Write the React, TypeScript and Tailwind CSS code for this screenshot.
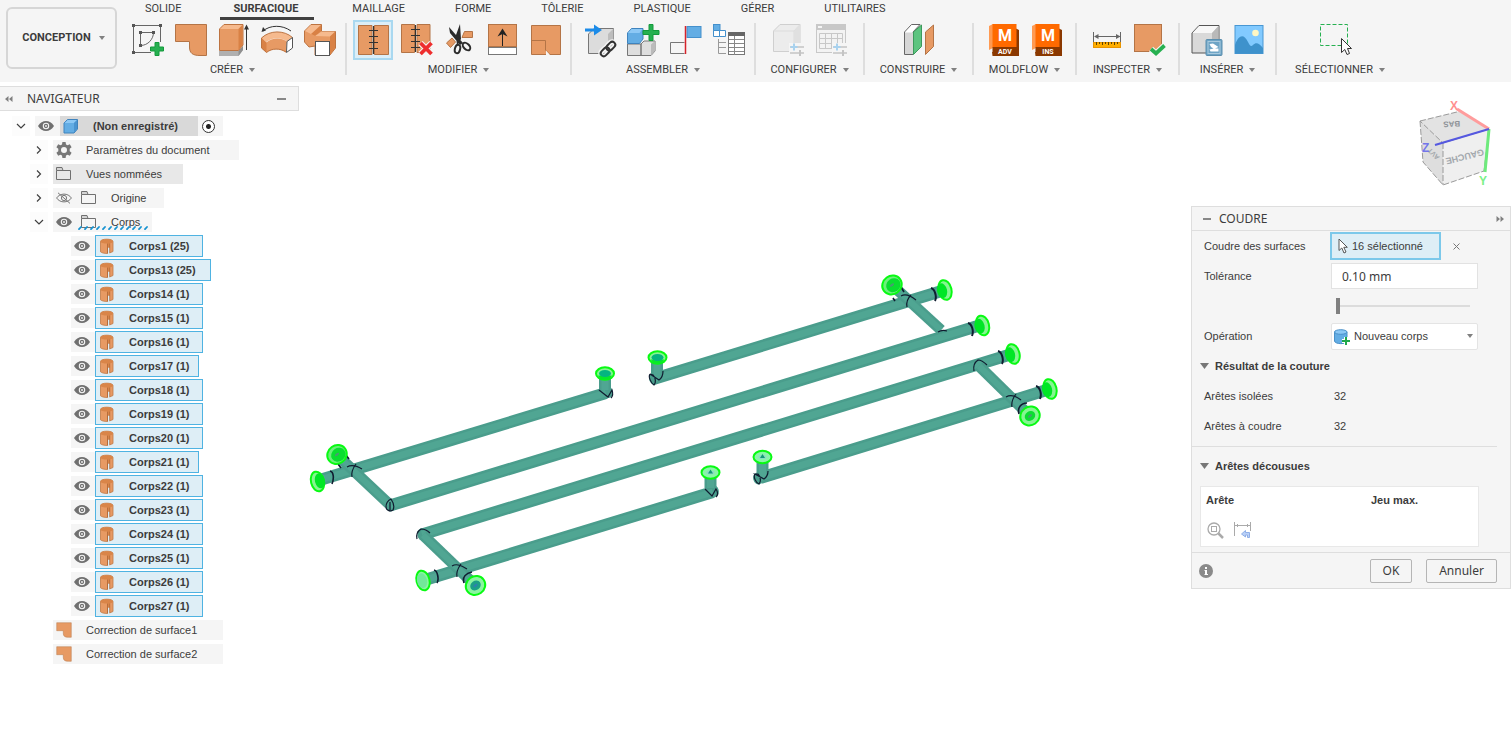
import { useState } from "react";
import type { ReactNode } from "react";
import clsx from "clsx";

const tabs = ["SOLIDE", "SURFACIQUE", "MAILLAGE", "FORME", "TÔLERIE", "PLASTIQUE", "GÉRER", "UTILITAIRES"];

// ---------- small shared glyphs ----------

function Caret({ className }: { className?: string }) {
    return (
        <svg viewBox="0 0 6 4" className={clsx("w-1.5 h-1 shrink-0 fill-[#808080]", className)} aria-hidden="true">
            <path d="M0 0H6L3 4Z" />
        </svg>
    );
}

function DoubleArrow({ flip }: { flip?: boolean }) {
    return (
        <svg viewBox="0 0 8 6" className={clsx("w-2 h-1.5 fill-[#808080]", flip && "rotate-180")} aria-hidden="true">
            <path d="M3.5 0V6L0 3ZM7.5 0V6L4 3Z" />
        </svg>
    );
}

function Chevron({ open }: { open?: boolean }) {
    return (
        <svg viewBox="0 0 10 10" className="w-2.5 h-2.5 fill-none stroke-[#404040]" strokeWidth="1.2" aria-hidden="true">
            <path d={open ? "M1 3L5 7L9 3" : "M3 1.5L6.5 5L3 8.5"} />
        </svg>
    );
}

function Eye({ hidden }: { hidden?: boolean }) {
    if (hidden) {
        return (
            <svg viewBox="0 0 16 12" className="w-4 h-3 fill-none stroke-[#777]" aria-hidden="true">
                <path d="M0.6 6C4 0.8 12 0.8 15.4 6C12 11.2 4 11.2 0.6 6Z" />
                <circle cx="8" cy="6" r="2.6" />
                <path d="M2 0.8L14 11.4" />
            </svg>
        );
    }
    return (
        <svg viewBox="0 0 16 12" className="w-4 h-3" aria-hidden="true">
            <path d="M0 6C4 -0.6 12 -0.6 16 6C12 12.6 4 12.6 0 6Z" fill="#707070" />
            <circle cx="8" cy="6" r="2.7" fill="#707070" stroke="#f5f5f5" strokeWidth="1.1" />
            <circle cx="8" cy="6" r="0.9" fill="#f5f5f5" />
        </svg>
    );
}

function Folder() {
    return (
        <svg viewBox="0 0 16 14" className="w-4 h-3.5 fill-none stroke-[#707070]" aria-hidden="true">
            <path d="M0.5 3.5V12.5H14.5V3.5H7" />
            <path d="M0.5 3.5V0.5H6L7 3.5Z" fill="#d4d4d4" />
        </svg>
    );
}

function Gear() {
    return (
        <svg viewBox="0 0 16 16" className="w-4 h-4 fill-[#777]" aria-hidden="true">
            <path
                fillRule="evenodd"
                d="M6.4 0H9.6L10 2.4L11.6 3.3L13.8 2.3L15.6 5.2L13.7 6.8V9.2L15.6 10.8L13.8 13.7L11.6 12.7L10 13.6L9.6 16H6.4L6 13.6L4.4 12.7L2.2 13.7L0.4 10.8L2.3 9.2V6.8L0.4 5.2L2.2 2.3L4.4 3.3L6 2.4ZM8 5A3 3 0 1 0 8 11A3 3 0 1 0 8 5Z"
            />
        </svg>
    );
}

function BlueCube() {
    return (
        <svg viewBox="0 0 16 16" className="w-4 h-4" aria-hidden="true">
            <path d="M1 5L4.5 1.5H14.5V11L11 15H1Z" fill="#63ade4" stroke="#3f83bd" />
            <path d="M1.5 5L4.7 2H14L11 5Z" fill="#8cc8f5" />
            <path d="M11 5L14 2V11L11 14.5Z" fill="#4a94d0" />
        </svg>
    );
}

function BodyIcon() {
    return (
        <svg viewBox="0 0 16 16" className="w-4 h-4" aria-hidden="true">
            <path d="M1.5 3.5C1.5 0.4 14 0.4 14 3.5V13.5L10.5 15V9.5H8.5V15.5C5 15.5 2.5 14.8 1.5 13.8Z" fill="#e79a64" stroke="#c07a48" strokeWidth="0.8" />
            <path d="M1.5 3.5C1.5 0.4 14 0.4 14 3.5C14 4.6 12 5.2 10.500 5.4V9.5H8.5V5.6C5 5.6 1.500 5 1.5 3.5Z" fill="#d98549" />
            <path d="M8.500 5.600V15.3M10.700 5.5V14.800" stroke="#a8602f" strokeWidth="0.7" />
            <path d="M9 9.800H10.300V15H9Z" fill="#deeef6" />
        </svg>
    );
}

function PatchShape() {
    return <path d="M3.5 2.5H34.5V33.5H28C20.5 33.5 17.5 31 17.5 25V19.5H3.5Z" fill="#e79a64" stroke="#b47446" />;
}

function Cursor({ className }: { className?: string }) {
    return (
        <svg viewBox="0 0 10 16" className={className} aria-hidden="true">
            <path d="M1 1V12.5L3.8 10L6 15L8 14L5.8 9.3H9.3Z" fill="#fff" stroke="#555" />
        </svg>
    );
}

// ---------- ribbon icons, all on a 36px grid ----------

function Ico({ children }: { children: ReactNode }) {
    return (
        <svg viewBox="0 0 36 36" className="relative w-9 h-9 overflow-visible" fill="none" aria-hidden="true">
            {children}
        </svg>
    );
}

function ConfigMark() {
    return (
        <g>
            <path d="M19 21H36V35H19Z" fill="#f5f5f5" />
            <path d="M20 25H34M20 31H34" stroke="#c4c4c4" strokeWidth="1.5" />
            <path d="M24 21.5V28.5M20.5 25H27.5" stroke="#a9d2ee" strokeWidth="2" />
            <path d="M30 28V34" stroke="#c4c4c4" strokeWidth="2" />
        </g>
    );
}

function MoldflowIcon({ label }: { label: string }) {
    return (
        <Ico>
            <path d="M4 4L8 2V26L4 28Z" fill="#ff9a52" />
            <path d="M30 6L34 8V34H8L7 30L30 28Z" fill="#8a3800" />
            <rect x="7.5" y="2" width="24" height="23" fill="#ff6a00" />
            <rect x="7.5" y="25" width="26" height="9" fill="#8a3800" />
            <text x="20" y="19" textAnchor="middle" fontSize="16" className="font-[Roboto] font-bold" fill="#fff">M</text>
            <text x="20" y="32" textAnchor="middle" fontSize="7" className="font-[Roboto] font-bold" fill="#fff">{label}</text>
        </Ico>
    );
}

const sketchIcon = (
    <Ico>
        <path d="M4.5 3.5H31.5V20M4.5 3.5V30.5H22" stroke="#666" />
        <path d="M11.5 23.5V10.5H24.5" stroke="#666" />
        <path d="M24.5 10.5C24.5 17 19 23.5 11.5 23.5" stroke="#666" />
        <path d="M3 2h3v3H3zM30 2h3v3h-3zM3 29h3v3H3zM10 9h3v3h-3zM23 9h3v3h-3zM10 22h3v3h-3z" fill="#555" />
        <path d="M26 20.5H30V25H34.5V29H30V33.5H26V29H21.5V25H26Z" fill="#26b050" stroke="#149a3c" />
    </Ico>
);

const extrudeIcon = (
    <Ico>
        <path d="M4 29H23.5L28 24V28L23.5 34H4Z" fill="#b0b0b0" />
        <path d="M23.5 29L28 24V28L23.5 34Z" fill="#8f8f8f" />
        <path d="M4.5 7L9 2.5H28V23L23.5 28.5H4.5Z" fill="#e79a64" stroke="#bd7340" />
        <path d="M5 7L9.2 3H27.5L23.5 7Z" fill="#f6ba8e" />
        <path d="M23.5 7L27.5 3V23L23.5 28Z" fill="#d98145" />
        <path d="M31.5 5V28" stroke="#333" />
        <path d="M31.5 2.5L34 7.5H29Z" fill="#333" />
    </Ico>
);

const revolveIcon = (
    <Ico>
        <path d="M3 16C12 8 26 8 34.5 15.5L29 19.5C23 15 14 15 8.500 20Z" fill="#f6ba8e" />
        <path d="M3.5 16L8.5 20.5C14 15.5 23 15.5 29 19.5L28 30.5C22 26 14 26 8.5 30.5L3.5 26Z" fill="#e79a64" />
        <path d="M3.5 16L8.5 20.5V30.5L3.5 26Z" fill="#d98145" />
        <path d="M3.5 16C12 8 26 8 34.5 15.5M3.5 16V26L8.5 30.5C14 26 22 26 28 30" stroke="#bd7340" />
        <path d="M29 19.5L34.5 15.5V26L28.5 30.5Z" fill="#fff" stroke="#555" />
        <path d="M5 9C12 3 24 2.5 33 9" stroke="#333" />
        <path d="M3.5 10L5 5L8 8.5Z" fill="#333" />
    </Ico>
);

const loftIcon = (
    <Ico>
        <path d="M3.5 9L10 2.5H20.5V9.5H34.5V26L29 33H14V24L8 25L3.5 20Z" fill="#e79a64" stroke="#bd7340" />
        <path d="M4 9L10 3H20V9.5L14 14Z" fill="#f6ba8e" />
        <path d="M14 14L20.5 9.5H34L29 14.5Z" fill="#f6ba8e" />
        <path d="M29 14.5L34 10V26L29 32.5Z" fill="#d98145" />
        <path d="M10 12L20 3V9.5L14 14Z" fill="#d98145" />
        <rect x="14.5" y="19.5" width="14" height="14" fill="#fff" stroke="#555" />
    </Ico>
);

const stitchIcon = (
    <Ico>
        <path d="M3.5 3.5H17V32.5H3.500ZM19.5 3.5H33.5V32.5H19.5Z" fill="#e79a64" stroke="#b47446" />
        <path d="M18.5 4V32M14 8.500H23M14 14.5H23M14 20.5H23M14 26.5H23" stroke="#333" />
    </Ico>
);

const unstitchIcon = (
    <Ico>
        <path d="M3.5 2.5H16.5V30.5H3.5ZM19 2.5H32V30.5H19Z" fill="#e79a64" stroke="#b47446" />
        <path d="M17.5 3V30M13 7.5H22M13 13.5H22M13 19.5H22M13 25.5H22" stroke="#333" />
        <path d="M22.5 21L33.5 32M33.5 21L22.5 32" stroke="#f5f5f5" strokeWidth="6" />
        <path d="M22.5 21L33.5 32M33.5 21L22.5 32" stroke="#ee2e2e" strokeWidth="3.8" />
    </Ico>
);

const trimIcon = (
    <Ico>
        <path d="M23.5 9.5H31.5V15.5H21Z" fill="#e79a64" stroke="#b47446" />
        <path d="M5.5 21L11 16L14.5 20L9.5 25.5Z" fill="#e79a64" stroke="#b47446" />
        <path d="M8 5L22 21L19 23L9 11ZM19 2L20 17L16 24L15 13Z" fill="#2b2b2b" />
        <ellipse cx="16.5" cy="27" rx="2.6" ry="4.3" stroke="#2b2b2b" strokeWidth="2" transform="rotate(15 16.5 27)" />
        <ellipse cx="25.5" cy="24.5" rx="2.8" ry="4.5" stroke="#2b2b2b" strokeWidth="2" transform="rotate(-45 25.5 24.5)" />
    </Ico>
);

const extendIcon = (
    <Ico>
        <rect x="4.5" y="2.5" width="28" height="22" fill="#e79a64" stroke="#b47446" />
        <rect x="4.5" y="25.5" width="28" height="7" fill="#fff" stroke="#777" />
        <path d="M18.5 10V24" stroke="#222" />
        <path d="M18.5 6.5L23.5 14.5L18.5 12L13.5 14.5Z" fill="#222" />
    </Ico>
);

const filletIcon = (
    <Ico>
        <path d="M4.5 3.5H33.5V32.5H4.5Z" fill="#e79a64" stroke="#b47446" />
        <path d="M4.5 18.5H18.5V28L23 32.5" stroke="#b47446" />
        <path d="M19 28.5L23 33H19Z" fill="#f5f5f5" />
    </Ico>
);

const insertLinkIcon = (
    <Ico>
        <path d="M7.5 12L13 6.5H32.5V26L27 31.5H7.5Z" fill="#dcdcdc" stroke="#777" />
        <path d="M27 12L32.5 6.5V26L27 31.5Z" fill="#bdbdbd" />
        <path d="M4 6.5H13V2.5L21 8L13 13.5V9.5H4Z" fill="#1c8be8" />
        <g transform="rotate(-45 27 27)">
            <rect x="18" y="24" width="10" height="6" rx="3" stroke="#f5f5f5" strokeWidth="5" />
            <rect x="26" y="24" width="10" height="6" rx="3" stroke="#f5f5f5" strokeWidth="5" />
            <rect x="18" y="24" width="10" height="6" rx="3" stroke="#333" strokeWidth="2" />
            <rect x="26" y="24" width="10" height="6" rx="3" stroke="#333" strokeWidth="2" />
        </g>
    </Ico>
);

const newComponentIcon = (
    <Ico>
        <path d="M3.5 22H17V33.5H3.5ZM17 22L20 19H31V29L27 33.5H17Z" fill="#dedede" stroke="#777" />
        <path d="M27 22.5L31 19V29L27 33.5Z" fill="#bbb" />
        <path d="M3.5 11L7.5 6.5H19V17L15.5 21.5H3.5Z" fill="#63ade4" stroke="#3f83bd" />
        <path d="M4 11L7.5 7H18.5L15.5 11Z" fill="#8cc8f5" />
        <path d="M25 2.5H29V8.5H35V12.5H29V18.5H25V12.5H19V8.5H25Z" fill="#26b050" stroke="#149a3c" />
    </Ico>
);

const jointIcon = (
    <Ico>
        <rect x="20" y="4.5" width="14" height="11" fill="#63ade4" stroke="#4490cc" />
        <path d="M17.5 20.5H3.5V31.5H17.5" stroke="#777" />
        <path d="M18.5 4V32" stroke="#d6222a" strokeWidth="1.5" />
    </Ico>
);

const bomIcon = (
    <Ico>
        <rect x="3.5" y="2.5" width="6.500" height="6" fill="#63ade4" stroke="#4490cc" />
        <path d="M3.5 8.5H9.5V14.5H3.5ZM9.5 8.5H15.5V14.5H9.5Z" fill="#fff" stroke="#4490cc" />
        <path d="M8.5 17V31.5M8.5 20.5H16M8.5 25.5H16M8.5 31.500H16" stroke="#999" />
        <rect x="18.5" y="10.5" width="16" height="22" fill="#fff" stroke="#777" />
        <path d="M18 10H35V14H18Z" fill="#666" />
        <path d="M19 17.5H34M19 21.5H34M19 25.5H34M19 29.5H34M24.5 14V33" stroke="#888" />
    </Ico>
);

const configCubeIcon = (
    <Ico>
        <path d="M3.5 9L10 2.5H30V23L24 29.5H3.5Z" fill="#ececec" stroke="#cfcfcf" />
        <path d="M3.5 9H24L30 2.5M24 9V29.5" stroke="#dcdcdc" />
        <path d="M24 9L30 2.5V23L24 29.5Z" fill="#e0e0e0" />
        <ConfigMark />
    </Ico>
);

const configTableIcon = (
    <Ico>
        <rect x="3.5" y="2.5" width="29" height="28" fill="#f3f3f3" stroke="#c8c8c8" />
        <path d="M3 2H33V8H3Z" fill="#c8c8c8" />
        <path d="M5 4h4v2H5z" fill="#f5f5f5" />
        <path d="M6.5 11.5H29.5V26.5H6.5ZM6.5 16.5H29.5M6.5 21.5H29.5M12.5 11.5V26.5M18.5 11.5V26.5M24.5 11.5V26.5" stroke="#c8c8c8" />
        <ConfigMark />
    </Ico>
);

const planeIcon = (
    <Ico>
        <path d="M3.5 10L10.5 2.5H19L12 10V32.5H3.5Z" fill="#fff" stroke="#666" />
        <path d="M4 10.5H12V32H4Z" fill="#d6d6d6" />
        <path d="M12.5 10L20.5 3V24.5L12.5 32.5Z" fill="#5cc47f" stroke="#3d9a5d" />
        <path d="M24.5 10L32.5 3V24.5L24.5 32.5Z" fill="#e79a64" stroke="#b47446" />
    </Ico>
);

const measureIcon = (
    <Ico>
        <path d="M5.5 10V20M32.5 10V20M7 14.5H32" stroke="#666" />
        <path d="M6 14.5L10.5 12V17ZM32.5 14.5L28 12V17Z" fill="#666" />
        <rect x="5.500" y="20.5" width="27" height="5" fill="#ffae00" stroke="#e89400" />
        <path d="M8.5 20V23M11.5 20V22M14.5 20V23M17.5 20V22M20.5 20V23M23.5 20V22M26.5 20V23M29.5 20V22" stroke="#5d4300" />
    </Ico>
);

const validateIcon = (
    <Ico>
        <rect x="3.5" y="2.5" width="27" height="27" fill="#e79a64" stroke="#b47446" />
        <path d="M20 27L25 31.5L33.5 23.5" stroke="#f5f5f5" strokeWidth="6" />
        <path d="M20 27L25 31.5L33.500 23.5" stroke="#26b050" strokeWidth="3.8" />
    </Ico>
);

const insertPartIcon = (
    <Ico>
        <path d="M4 11L11 3.5H31V24L24 31H4Z" fill="#d9d9d9" stroke="#555" />
        <path d="M4.5 11L11.3 4H30.5L24 11Z" fill="#f7f7f7" />
        <path d="M24 11L30.500 4V24H24Z" fill="#b9b9b9" />
        <rect x="18" y="17.5" width="16" height="16" rx="1" fill="#6ea4c5" stroke="#5b8eae" />
        <rect x="20" y="19.5" width="12" height="12" stroke="#a9cade" />
        <path d="M21.5 22L25 21.500L30.500 25L27 26.5H30.5V29.500H22.500L21.500 27.500L25.5 26.500L23 25Z" fill="#fff" />
    </Ico>
);

const insertImageIcon = (
    <Ico>
        <rect x="4" y="3.5" width="28" height="28" fill="#82caff" stroke="#4897d3" />
        <path d="M4 23C8 12 13 12 17 20C19 24 20 25 22 23C25 20 28 21 32 26V31.5H4Z" fill="#3e92cc" />
        <circle cx="24.5" cy="11" r="3.3" fill="#fff7c4" />
    </Ico>
);

const selectIcon = (
    <Ico>
        <rect x="-1.5" y="2.5" width="27" height="21" stroke="#26b050" strokeDasharray="4 2" />
        <path d="M19.5 16.5V30.5L22.8 27.5L25 32.5L27.5 31.5L25.5 26.5H29.5Z" fill="#fff" stroke="#333" />
    </Ico>
);

interface RibbonGroupData {
    label: string;
    width: string;
    icons: ReactNode[];
    active?: number;
}

const groups: RibbonGroupData[] = [
    { label: "CRÉER", width: "w-[227px]", icons: [sketchIcon, <Ico><PatchShape /></Ico>, extrudeIcon, revolveIcon, loftIcon] },
    { label: "MODIFIER", width: "w-[225px]", icons: [stitchIcon, unstitchIcon, trimIcon, extendIcon, filletIcon], active: 0 },
    { label: "ASSEMBLER", width: "w-[184px]", icons: [insertLinkIcon, newComponentIcon, jointIcon, bomIcon] },
    { label: "CONFIGURER", width: "w-[109px]", icons: [configCubeIcon, configTableIcon] },
    { label: "CONSTRUIRE", width: "w-[109px]", icons: [planeIcon] },
    { label: "MOLDFLOW", width: "w-[103px]", icons: [<MoldflowIcon label="ADV" />, <MoldflowIcon label="INS" />] },
    { label: "INSPECTER", width: "w-[103px]", icons: [measureIcon, validateIcon] },
    { label: "INSÉRER", width: "w-[97px]", icons: [insertPartIcon, insertImageIcon] },
    { label: "SÉLECTIONNER", width: "w-[128px]", icons: [selectIcon] },
];

function Ribbon() {
    const [tab, setTab] = useState("SURFACIQUE");

    return (
        <header className="flex h-[82px] shrink-0 bg-[#f5f5f5] font-[Roboto,sans-serif] text-[11px] text-[#3c3c3c]">
            <button className="mt-[7px] ml-1.5 flex h-[62px] w-[111px] shrink-0 items-center justify-center gap-2 rounded-md border-2 border-[#d6d6d6] pl-1 font-bold">
                CONCEPTION
                <Caret />
            </button>
            <div className="ml-[3px]">
                <nav className="ml-[13px] flex gap-[26px]">
                    {tabs.map((t) => (
                        <button
                            key={t}
                            onClick={() => setTab(t)}
                            className={clsx("h-5 border-b-3 leading-4", t === tab ? "border-[#404040] pr-4 pl-3.5 font-bold" : "border-transparent px-3")}
                        >
                            {t}
                        </button>
                    ))}
                </nav>
                <div className="mt-[3px] flex">
                    {groups.map((g) => (
                        <section key={g.label} className={clsx("flex h-[52px] shrink-0 flex-col items-center border-r-2 border-[#dedede] last:border-transparent", g.width)}>
                            <div className="-mt-px flex gap-[7px]">
                                {g.icons.map((icon, i) => (
                                    <button key={i} className="relative h-9 w-9" aria-label={g.label}>
                                        {g.active === i && <span className="absolute -inset-0.5 border-2 border-[#a9d8f0] bg-[#dceef7]" />}
                                        {icon}
                                    </button>
                                ))}
                            </div>
                            <button className="mt-1 flex items-center gap-1.5 leading-4">
                                {g.label}
                                <Caret />
                            </button>
                        </section>
                    ))}
                </div>
            </div>
        </header>
    );
}

// ---------- browser tree ----------

const bodies = [
    { name: "Corps1 (25)", width: "w-[108px]" },
    { name: "Corps13 (25)", width: "w-[116px]" },
    { name: "Corps14 (1)", width: "w-[108px]" },
    { name: "Corps15 (1)", width: "w-[108px]" },
    { name: "Corps16 (1)", width: "w-[108px]" },
    { name: "Corps17 (1)", width: "w-[104px]" },
    { name: "Corps18 (1)", width: "w-[108px]" },
    { name: "Corps19 (1)", width: "w-[108px]" },
    { name: "Corps20 (1)", width: "w-[108px]" },
    { name: "Corps21 (1)", width: "w-[104px]" },
    { name: "Corps22 (1)", width: "w-[108px]" },
    { name: "Corps23 (1)", width: "w-[108px]" },
    { name: "Corps24 (1)", width: "w-[108px]" },
    { name: "Corps25 (1)", width: "w-[108px]" },
    { name: "Corps26 (1)", width: "w-[108px]" },
    { name: "Corps27 (1)", width: "w-[108px]" },
];

function Expander({ open }: { open?: boolean }) {
    return (
        <button className="mr-[5px] flex h-5 w-[18px] items-center justify-center bg-[#fcfcfc]" aria-label="Développer">
            <Chevron open={open} />
        </button>
    );
}

function Navigator() {
    return (
        <aside className="w-[300px] shrink-0 pt-1 font-['Liberation_Sans',Arial,sans-serif] text-[11px] text-[#3c3c3c]">
            <div className="mr-px flex h-[25px] items-center border border-l-0 border-[#dedede] bg-[#f5f5f5] pl-[5px]">
                <DoubleArrow />
                <h2 className="ml-3.5 flex-1 font-['Noto_Sans',sans-serif] text-xs">NAVIGATEUR</h2>
                <button className="mr-3 h-0.5 w-[9px] bg-[#888]" aria-label="Réduire" />
            </div>
            <ul className="mt-[5px] flex flex-col gap-1">
                <li className="flex pl-3">
                    <Expander open />
                    <span className="flex h-5 w-[25px] items-center bg-[#f5f5f5] pl-[3px]"><Eye /></span>
                    <span className="flex h-5 w-[138px] items-center bg-[#d9d9d9] pl-[3px] font-bold">
                        <BlueCube />
                        <span className="ml-3.5">(Non enregistré)</span>
                    </span>
                    <label className="flex h-5 w-[25px] items-center bg-[#f5f5f5] pl-1">
                        <input
                            type="radio"
                            defaultChecked
                            aria-label="Activer"
                            className="h-[13px] w-[13px] appearance-none rounded-full border border-[#333] bg-[radial-gradient(circle,#222_2px,#fff_3px)]"
                        />
                    </label>
                </li>
                <li className="flex pl-[30px]">
                    <Expander />
                    <span className="flex h-5 w-[186px] items-center gap-[14px] bg-[#f5f5f5] pl-[3px]"><Gear />Paramètres du document</span>
                </li>
                <li className="flex pl-[30px]">
                    <Expander />
                    <span className="flex h-5 w-[130px] items-center gap-[14px] bg-[#e8e8e8] pl-[3px]"><Folder />Vues nommées</span>
                </li>
                <li className="flex pl-[30px]">
                    <Expander />
                    <span className="flex h-5 w-[111px] items-center bg-[#f5f5f5] pl-[3px]">
                        <Eye hidden />
                        <span className="ml-[9px] flex items-center gap-[14px]"><Folder />Origine</span>
                    </span>
                </li>
                <li className="flex pl-[30px]">
                    <Expander open />
                    <span className="relative flex h-5 w-[99px] items-center bg-[#f5f5f5] pl-[3px]">
                        <Eye />
                        <span className="ml-[9px] flex items-center gap-[14px]"><Folder />Corps</span>
                        <svg viewBox="0 0 72 4" className="absolute bottom-0.5 left-6 h-1 w-[72px]" aria-hidden="true">
                            {Array.from({ length: 12 }, (_, i) => (
                                <path key={i} d={`M${i * 6 + 2} 3.2L${i * 6 + 4} 1`} stroke="#1793d1" strokeWidth="1.8" strokeLinecap="round" />
                            ))}
                        </svg>
                    </span>
                </li>
                {bodies.map((b) => (
                    <li key={b.name} className="flex h-5 items-center pl-[71px]">
                        <span className="flex h-5 w-6 shrink-0 items-center bg-[#f5f5f5] pl-[3px]"><Eye /></span>
                        <span className={clsx("flex h-[22px] shrink-0 items-center border border-[#4fb3e2] bg-[#deeef6] pr-2 pl-[3px] font-bold", b.width)}>
                            <BodyIcon />
                            <span className="ml-3.5 overflow-hidden whitespace-nowrap">{b.name}</span>
                        </span>
                    </li>
                ))}
                {["Correction de surface1", "Correction de surface2"].map((name) => (
                    <li key={name} className="flex pl-[53px]">
                        <span className="flex h-5 w-[170px] items-center gap-[14px] bg-[#f5f5f5] pl-[3px]">
                            <svg viewBox="2 1 34 34" className="h-4 w-4" aria-hidden="true"><PatchShape /></svg>
                            {name}
                        </span>
                    </li>
                ))}
            </ul>
        </aside>
    );
}

// ---------- 3D model ----------

// long tubes, then the short cross tubes and risers
const longTubes = [
    [318, 480.5, 606, 393],
    [390, 505.5, 981, 325],
    [422, 534.5, 1012, 354],
    [423, 580.5, 713, 492],
    [655, 378.5, 945, 290],
    [760, 478, 1050, 389],
];
const crossTubes = [
    [338, 456, 389, 504],
    [423, 535, 475, 585],
    [892, 285, 941, 330],
    [979, 366, 1030, 416],
];
const risers = [
    [605, 374, 605, 390],
    [657, 357, 657, 376],
    [710.5, 472, 710.5, 488],
    [762.5, 457, 762.5, 475],
];
// closed tube ends and mitres
const elbows = [
    [608, 392], [714, 491], [654, 379], [758, 478.5], [390, 505.5], [422, 534.5], [979, 366],
];

// open ends: centre, radii, tilt, disc fill, core shift and core colour
const caps = [
    { x: 317.5, y: 481.5, rx: 6.5, ry: 10, a: -14, fill: "#86f592", dx: 2.5, core: "#00e626" },
    { x: 423, y: 580.5, rx: 6.5, ry: 10, a: -14, fill: "#8af5a0", dx: -1, core: "#72e89a" },
    { x: 945, y: 290, rx: 6.5, ry: 10, a: -14, fill: "#86f592", dx: -3, core: "#00e626" },
    { x: 982.5, y: 325.5, rx: 6.5, ry: 10, a: -14, fill: "#86f592", dx: -3, core: "#00e626" },
    { x: 1013, y: 354, rx: 6.5, ry: 10, a: -14, fill: "#86f592", dx: -3, core: "#00e626" },
    { x: 1050, y: 389, rx: 6.5, ry: 10, a: -14, fill: "#86f592", dx: -3, core: "#00e626" },
];
const discs = [
    { x: 337, y: 454.5, r: 7.5, ring: "#6cf07a", core: "#0ade30", dot: "#4a9a72", shift: 1 },
    { x: 892, y: 285, r: 7.5, ring: "#6cf07a", core: "#0ade30", dot: "#4a9a72", shift: 1 },
    { x: 475.5, y: 585.5, r: 5.5, ring: "#8af5a0", core: "#1c9f86", dot: "#2f7fb0", shift: 0 },
    { x: 1030, y: 416, r: 5.5, ring: "#86f592", core: "#0ade30", dot: "#4a9a72", shift: 0 },
];
const riserCaps = [
    { x: 605, y: 373.5, open: false },
    { x: 657.5, y: 357.5, open: false },
    { x: 710.5, y: 472.5, open: true },
    { x: 762.5, y: 457, open: true },
];

function Tube({ p, w }: { p: number[]; w: number }) {
    const d = `M${p[0]} ${p[1]}L${p[2]} ${p[3]}`;
    return (
        <>
            <path d={d} stroke="#4a9d8c" strokeWidth={w} />
            <path d={d} stroke="#50a693" strokeWidth={w - 5} />
        </>
    );
}

function Model() {
    return (
        <svg viewBox="300 82 891 649" className="min-w-0 flex-1 self-start" fill="none" role="img" aria-label="Modèle">
            {elbows.map(([x, y]) => <ellipse key={x} cx={x} cy={y} rx="4.8" ry="6" fill="#4a9d8c" transform={`rotate(-15 ${x} ${y})`} />)}
            {longTubes.map((p, i) => <Tube key={i} p={p} w={12} />)}
            {crossTubes.map((p, i) => <Tube key={i} p={p} w={11} />)}
            {risers.map((p, i) => <Tube key={i} p={p} w={12} />)}

            {/* seams */}
            <g stroke="#101c30" strokeWidth="1.2">
                <path d="M347 467C352 464 357 466 362 469M352 477C351 472 353 468 356 464" />
                <path d="M901 296C906 293 911 296 916 300M907 307C906 302 908 298 911 295" />
                <path d="M452 566C457 563 462 566 467 569M457 577C456 572 458 568 461 564" />
                <path d="M1006 397C1011 394 1016 396 1021 400M1012 407C1011 402 1013 398 1016 394" />
                <path d="M417 539C416 535 418 531 421 529C425 529 428 531 430 533" />
                <path d="M974 371C973 366 975 362 978 360C982 360 985 363 987 365" />
                <path d="M386 507C386 503 389 500 391 499C393 502 395 506 393 510C390 512 386 510 386 507ZM390 510V502" />
                <path d="M938 332C941 330 944 330 947 331" />
                <path d="M599 390L608 397L612 390C613 393 613 396 611 398" />
                <path d="M705 489L712 496L716 489C718 492 718 495 716 497" />
                <path d="M650 374C648 377 651 383 654 385C656 383 656 378 653 375L650 374L659 380C662 378 663 375 663 371" />
                <path d="M755 474C753 477 756 483 759 484C761 482 761 477 758 474L755 474L764 479C767 477 768 475 768 471" />
                <path d="M330 471C334 472 334 479 332 484M434 570C438 571 439 580 437 583" strokeWidth="1.6" />
                <path d="M341 468L338 464M349 459L346 455M895 301L893 298M904 292L901 287" strokeWidth="1.6" />
                <path d="M472 572C466 573 462 577 464 583M1027 403C1021 403 1017 408 1019 414" strokeWidth="1.6" />
                <path d="M931 288C935 289 937 297 935 301M968 323C972 324 974 331 972 336M998 351C1002 352 1004 360 1002 364M1036 386C1040 387 1042 394 1040 399" strokeWidth="2" />
            </g>

            {caps.map((c, i) => (
                <g key={i} transform={`rotate(${c.a} ${c.x} ${c.y})`}>
                    <ellipse cx={c.x} cy={c.y} rx={c.rx} ry={c.ry} fill={c.fill} stroke="#08fa12" strokeWidth="2" />
                    <ellipse cx={c.x + c.dx} cy={c.y} rx="5" ry="7.5" fill={c.core} />
                </g>
            ))}
            {discs.map((c, i) => (
                <g key={i} transform={`rotate(-35 ${c.x} ${c.y})`}>
                    <ellipse cx={c.x} cy={c.y} rx="10" ry="9.2" fill={c.ring} stroke="#08fa12" strokeWidth="2" />
                    <ellipse cx={c.x + c.shift} cy={c.y + c.shift} rx={c.r} ry={c.r - 0.8} fill={c.core} />
                    <ellipse cx={c.x} cy={c.y} rx="2.4" ry="1.2" fill={c.dot} />
                </g>
            ))}
            {riserCaps.map((c, i) => (
                <g key={i}>
                    <ellipse cx={c.x} cy={c.y} rx="9" ry="6.2" fill={c.open ? "#8af5a8" : "#86f592"} stroke="#08fa12" strokeWidth="2" />
                    {!c.open && <path d={`M${c.x - 7} ${c.y + 2}H${c.x + 7}L${c.x + 4} ${c.y + 6}H${c.x - 4}Z`} fill="#08e82a" />}
                    <ellipse cx={c.x} cy={c.y} rx={c.open ? 4 : 6} ry={c.open ? 2 : 3.5} fill={c.open ? "#8adcc4" : "#04b580"} />
                    {c.open && <path d={`M${c.x} ${c.y - 3}L${c.x + 2.5} ${c.y + 1}H${c.x - 2.5}Z`} fill="#119a74" />}
                </g>
            ))}
        </svg>
    );
}

function ViewCube() {
    return (
        <svg viewBox="1410 95 90 95" className="mr-2.5 h-[95px] w-[90px]" aria-label="ViewCube" role="img">
            <path d="M1419 121L1460 111L1488 129L1442 143Z" fill="#e3e3e3" />
            <path d="M1419 121L1442 143V185L1422 162Z" fill="#dedede" />
            <path d="M1442 143L1488 129L1483 171L1442 185Z" fill="#efefef" />
            <path d="M1419 121L1460 111L1488 129L1442 143ZM1419 121L1422 162L1442 185L1483 171L1488 129M1442 143V185" fill="none" stroke="#9a9a9a" strokeDasharray="6 2" />
            <g className="font-['Liberation_Sans'] font-bold" fill="#a3a8ad">
                <text transform="translate(1482 149) rotate(166)" fontSize="9">GAUCHE</text>
                <text transform="translate(1459 121) rotate(178)" fontSize="8" fill="#8d9297">BAS</text>
                <text transform="translate(1439 157) rotate(225)" fontSize="7">AVT</text>
            </g>
            <path d="M1456 109L1488 129" stroke="#ff9c9c" strokeWidth="3" />
            <path d="M1488 129L1484 172" stroke="#6eea7c" strokeWidth="3" />
            <path d="M1434 145L1488 129" stroke="#5558e0" strokeWidth="2" />
            <g className="font-['Liberation_Sans'] font-bold" fontSize="12">
                <text x="1449" y="110" fill="#ff8f8f">X</text>
                <text x="1421" y="152" fill="#7376ea">Z</text>
                <text x="1478" y="185" fill="#7cf089">Y</text>
            </g>
        </svg>
    );
}

// ---------- stitch dialog ----------

function SectionTitle({ children }: { children: ReactNode }) {
    return (
        <h3 className="flex h-[30px] items-center gap-1.5 pl-2 font-bold">
            <svg viewBox="0 0 9 6" className="h-1.5 w-[9px] fill-[#777]" aria-hidden="true"><path d="M0 0H9L4.5 6Z" /></svg>
            {children}
        </h3>
    );
}

function StitchPanel() {
    const [tolerance, setTolerance] = useState("0.10 mm");

    return (
        <section className="mt-4 w-80 border border-[#dedede] bg-[#f5f5f5] font-['Liberation_Sans',Arial,sans-serif] text-[11px] text-[#3c3c3c]">
            <header className="flex h-6 items-center border-b border-[#dedede] pr-1.5 pl-[11px]">
                <button className="h-0.5 w-2 bg-[#888]" aria-label="Réduire" />
                <h2 className="ml-2 flex-1 font-['Noto_Sans',sans-serif] text-xs">COUDRE</h2>
                <DoubleArrow flip />
            </header>

            <div className="flex h-[30px] items-center pl-3">
                <span className="w-[127px]">Coudre des surfaces</span>
                <button className="-ml-px flex h-7 w-[111px] items-center gap-1 border-2 border-[#7cc8ea] bg-[#deeef6] pl-1.5">
                    <Cursor className="h-4 w-2.5" />
                    16 sélectionné
                </button>
                <button className="ml-3 p-0" aria-label="Effacer">
                    <svg viewBox="0 0 7 7" className="h-[7px] w-[7px] stroke-[#777]" aria-hidden="true"><path d="M0.5 0.5L6.5 6.5M6.5 0.5L0.5 6.5" /></svg>
                </button>
            </div>
            <div className="flex h-[30px] items-center pl-3">
                <label htmlFor="tol" className="w-[127px]">Tolérance</label>
                <input
                    id="tol"
                    value={tolerance}
                    onChange={(e) => setTolerance(e.target.value)}
                    className="h-[26px] w-[147px] border border-[#e2e2e2] bg-white pl-2.5 font-['Noto_Sans',sans-serif] text-xs"
                />
            </div>
            <div className="flex h-[30px] items-center pl-[144px]">
                <input
                    type="range"
                    defaultValue={0}
                    aria-label="Tolérance"
                    className="h-4 w-[134px] appearance-none bg-[linear-gradient(#dcdcdc,#dcdcdc)] bg-[length:100%_2px] bg-center bg-no-repeat [&::-webkit-slider-thumb]:h-4 [&::-webkit-slider-thumb]:w-1 [&::-webkit-slider-thumb]:appearance-none [&::-webkit-slider-thumb]:bg-[#808080]"
                />
            </div>
            <div className="flex h-[30px] items-center pl-3">
                <label htmlFor="op" className="w-[127px]">Opération</label>
                <div className="relative">
                    <select id="op" className="h-[27px] w-[147px] appearance-none rounded-xs border border-[#e4e4e4] bg-white pl-[22px]">
                        <option>Nouveau corps</option>
                    </select>
                    <svg viewBox="0 0 16 16" className="pointer-events-none absolute top-1.5 left-[3px] h-4 w-4" aria-hidden="true">
                        <path d="M0.5 3V12C1 15.5 12.5 15.5 13 12V3Z" fill="#63ade4" stroke="#4a90c8" />
                        <ellipse cx="6.75" cy="3" rx="6.25" ry="2.3" fill="#8cc8f5" stroke="#4a90c8" />
                        <path d="M12 8V16M8 12H16" stroke="#fff" strokeWidth="4" />
                        <path d="M12 8V16M8 12H16" stroke="#1fa84a" strokeWidth="2" />
                    </svg>
                    <Caret className="pointer-events-none absolute top-[11px] right-[5px]" />
                </div>
            </div>

            <SectionTitle>Résultat de la couture</SectionTitle>
            <dl>
                <div className="flex h-[30px] items-center pl-3"><dt className="w-[130px]">Arêtes isolées</dt><dd>32</dd></div>
                <div className="flex h-[30px] items-center pl-3"><dt className="w-[130px]">Arêtes à coudre</dt><dd>32</dd></div>
            </dl>

            <div className="mt-[5px] mr-[13px] border-t border-[#dedede] pt-1">
                <SectionTitle>Arêtes décousues</SectionTitle>
            </div>
            <div className="mt-[5px] mr-[31px] mb-[5px] ml-2 h-[61px] border border-[#e8e8e8] bg-white">
                <table className="w-full table-fixed text-left">
                    <thead>
                        <tr className="h-[26px]">
                            <th className="w-[170px] pl-[5px]">Arête</th>
                            <th>Jeu max.</th>
                        </tr>
                    </thead>
                </table>
                <div className="flex gap-2.5 pt-[9px] pl-1.5">
                    <button aria-label="Zoom">
                        <svg viewBox="0 0 17 17" className="h-[17px] w-[17px] fill-none stroke-[#aaa]" aria-hidden="true">
                            <circle cx="7" cy="7" r="6" strokeWidth="1.3" />
                            <rect x="4.5" y="4.5" width="5" height="5" />
                            <path d="M11.5 11.5L16 16" strokeWidth="2.5" />
                        </svg>
                    </button>
                    <button aria-label="Inverser">
                        <svg viewBox="0 0 17 17" className="h-[17px] w-[17px] fill-none stroke-[#aaa]" aria-hidden="true">
                            <path d="M0.5 0V14M16.5 0V9M1 3.5H16M3.5 2V5M13.500 2V5" />
                            <path d="M7.5 12L11.5 8.5V10.5H15.5V15.5H13.5V13H11.5V15Z" fill="#b9d0f7" stroke="#8fafe8" />
                        </svg>
                    </button>
                </div>
            </div>

            <footer className="flex h-9 items-center border-t border-[#dedede] pr-[13px] pl-[7px] font-['Noto_Sans',sans-serif] text-xs">
                <svg viewBox="0 0 14 14" className="h-3.5 w-3.5" aria-hidden="true">
                    <circle cx="7" cy="7" r="7" fill="#8a8a8a" />
                    <path d="M6 3h2v2H6zM5.5 6H8V10H9V11H5.5V10H6V7H5.5Z" fill="#fff" />
                </svg>
                <button className="ml-auto h-6 w-[42px] rounded-xs border border-[#b5b5b5]">OK</button>
                <button className="ml-3.5 h-6 w-[71px] rounded-xs border border-[#b5b5b5]">Annuler</button>
            </footer>
        </section>
    );
}

export default function App() {
    return (
        <div className="flex min-h-screen flex-col overflow-hidden bg-white">
            <Ribbon />
            <main className="flex flex-1">
                <Navigator />
                <Model />
                <div className="flex w-80 shrink-0 flex-col items-end pt-[13px]">
                    <ViewCube />
                    <StitchPanel />
                </div>
            </main>
        </div>
    );
}
